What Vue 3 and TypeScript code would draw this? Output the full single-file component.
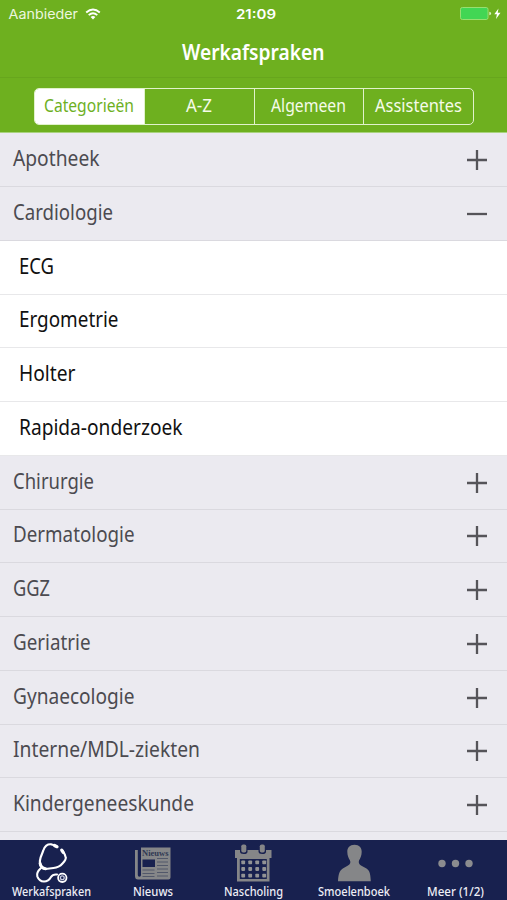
<script setup lang="ts">
import { ref, computed } from 'vue'

interface Item { label: string; width: number }
interface Category extends Item { children?: Item[] }

const tabs: Item[] = [
  { label: 'Categorieën', width: 90 },
  { label: 'A-Z', width: 26 },
  { label: 'Algemeen', width: 75 },
  { label: 'Assistentes', width: 87 },
]
const activeTab = ref(0)
const open = ref('Cardiologie')

const categories: Category[] = [
  { label: 'Apotheek', width: 86.5 },
  {
    label: 'Cardiologie',
    width: 100,
    children: [
      { label: 'ECG', width: 35 },
      { label: 'Ergometrie', width: 99.5 },
      { label: 'Holter', width: 56.5 },
      { label: 'Rapida-onderzoek', width: 163.5 },
    ],
  },
  { label: 'Chirurgie', width: 81 },
  { label: 'Dermatologie', width: 121.5 },
  { label: 'GGZ', width: 37 },
  { label: 'Geriatrie', width: 77.5 },
  { label: 'Gynaecologie', width: 121.5 },
  { label: 'Interne/MDL-ziekten', width: 187 },
  { label: 'Kindergeneeskunde', width: 181 },
  { label: '', width: 0 },
]

interface Row extends Item { child: boolean; expanded: boolean }
const rows = computed<Row[]>(() =>
  categories.flatMap((c) => {
    const expanded = c.label !== '' && c.label === open.value
    return [
      { label: c.label, width: c.width, child: false, expanded },
      ...(expanded ? c.children ?? [] : []).map((k) => ({ ...k, child: true, expanded: false })),
    ]
  }),
)

const nav = [
  { id: 'work', label: 'Werkafspraken', width: 79 },
  { id: 'news', label: 'Nieuws', width: 40 },
  { id: 'cal', label: 'Nascholing', width: 59 },
  { id: 'face', label: 'Smoelenboek', width: 72 },
  { id: 'more', label: 'Meer (1/2)', width: 57 },
]
const calendarDots = [0, 1, 2].flatMap((r) => [0, 1, 2, 3].map((c) => ({ x: 8 + c * 7, y: 16.5 + r * 6.6 })))
</script>

<template>
  <div class="screen">
    <header class="header">
      <div class="status">
        <div class="carrier">
          <svg width="71" height="20"><text x="0.5" y="14.5" textLength="69.5" lengthAdjust="spacingAndGlyphs">Aanbieder</text></svg>
          <svg class="wifi" width="16" height="12" viewBox="0 0 16 12">
            <g fill="none" stroke="#fff" stroke-width="1.9">
              <path d="M1.2 4.5Q8-1.4 14.8 4.5" />
              <path d="M3.7 7.1Q8 3.4 12.3 7.1" />
            </g>
            <path d="M5.6 9Q8 7 10.4 9L8 11.5Z" fill="#fff" />
          </svg>
        </div>
        <svg class="clock" width="40" height="20"><text x="0" y="14.5" textLength="40" lengthAdjust="spacingAndGlyphs">21:09</text></svg>
        <svg class="battery" width="44" height="16" viewBox="0 0 44 16">
          <rect x="0.5" y="1.5" width="27.5" height="12" rx="1.8" fill="#42d654" stroke="#98df70" />
          <path d="M29.3 5.7Q31.1 6 31.1 7.5T29.3 9.3Z" fill="#d8f4c5" />
          <path d="M38.5 2.5L34.3 8.2H36.9L36 13L40.5 6.8H37.7Z" fill="#fff" />
        </svg>
      </div>
      <h1 class="title">
        <svg width="143" height="30"><text x="0" y="22" textLength="142.5" lengthAdjust="spacingAndGlyphs">Werkafspraken</text></svg>
      </h1>
      <div class="filter">
        <div class="segments">
          <button v-for="(t, i) in tabs" :key="t.label" class="segment" :class="{ active: i === activeTab }" @click="activeTab = i">
            <svg :width="t.width" height="26"><text x="0" y="18.5" :textLength="t.width" lengthAdjust="spacingAndGlyphs">{{ t.label }}</text></svg>
          </button>
        </div>
      </div>
    </header>

    <main class="list">
      <div v-for="(r, i) in rows" :key="i" class="row" :class="{ child: r.child }" @click="!r.child && (open = open === r.label ? '' : r.label)">
        <svg v-if="r.label" class="label" :width="r.width + 2" height="32">
          <text x="0" y="23.7" :textLength="r.width" lengthAdjust="spacingAndGlyphs">{{ r.label }}</text>
        </svg>
        <svg v-if="!r.child && r.label" class="toggle" width="20" height="20" viewBox="0 0 20 20">
          <path :d="r.expanded ? 'M0 10H20' : 'M0 10H20M10 0V20'" stroke="#555459" stroke-width="2.3" />
        </svg>
      </div>
    </main>

    <nav class="nav">
      <div v-for="n in nav" :key="n.id" class="nav-item">
        <svg v-if="n.id === 'work'" class="icon" width="40" height="42" viewBox="0 0 40 42" fill="none" stroke="#fff" stroke-linecap="round" stroke-linejoin="round">
          <path d="M22.5 4.3L19.5 3.4Q16.5 3 14.3 4.6Q12.3 6.3 11.3 9.5L8.6 16.5Q7.3 20 8.2 24Q9.3 27.7 13.5 28L21.5 27Q27 26.5 30.5 22.5Q34.3 18.6 33.7 16.3Q33.2 13.3 30.5 9.5" stroke-width="2.1" />
          <path d="M22.5 4.5L25 5.7M29.7 9.2L31.2 11.5" stroke-width="3.2" />
          <path d="M8.1 22.5Q9 27 13.5 27.7" stroke-width="3" />
          <path d="M8.5 27.5Q4.3 31.3 5.3 35.3Q7.2 40.2 12 40.5Q16.5 40.5 19 36Q20.8 33 25 33.5" stroke-width="2.1" />
          <circle cx="30.3" cy="36.8" r="4.2" stroke-width="1.8" />
          <circle cx="30.3" cy="36.8" r="1.9" stroke="#c9cce0" stroke-width="1.3" />
        </svg>
        <svg v-else-if="n.id === 'news'" class="icon" width="40" height="42" viewBox="0 0 40 42">
          <path d="M8 6.5H37.5V36.5Q37.5 38.5 35.5 38.5H5Q2 38.5 2 35V9H4.8V34Q4.8 35.7 6.4 35.7T8 34Z" fill="#858688" />
          <text class="masthead" x="9" y="14.8" textLength="26.5" lengthAdjust="spacingAndGlyphs">Nieuws</text>
          <rect x="9.5" y="18.5" width="12.5" height="7.5" fill="#18214f" />
          <path d="M24 17.5H35M24 21H35M24 24.5H35M24 28H35M9.5 29H21.5M24 31.5H35M9.5 32.5H21.5M24 35H35M9.5 35.5H21.5" stroke="#4c5267" stroke-width=".9" />
        </svg>
        <svg v-else-if="n.id === 'cal'" class="icon" width="40" height="42" viewBox="0 0 40 42">
          <path d="M2 9H7V10.5Q7 13 10.8 13T14.5 10.5V9H25.5V10.5Q25.5 13 29.3 13T33 10.5V9H38.5V17H36.5V40.5H4V17H2Z" fill="#858688" />
          <rect x="8.3" y="3.5" width="5" height="8" rx="1.8" fill="#858688" />
          <rect x="26.8" y="3.5" width="5" height="8" rx="1.8" fill="#858688" />
          <rect x="6.8" y="18" width="27" height="20" fill="#18214f" />
          <rect v-for="(d, i) in calendarDots" :key="i" :x="d.x + .3" :y="d.y + 3" width="3.8" height="3.8" rx=".8" fill="#929395" />
        </svg>
        <svg v-else-if="n.id === 'face'" class="icon" width="40" height="42" viewBox="0 0 40 42">
          <path d="M20.5 3.8C25.3 3.8 27.7 6.7 27.7 10.7C27.7 14.7 26.3 17 25 19.5Q24 22.5 27 24.5L32.5 27.5C36 29.7 36.5 34 36.8 40.3H4C4.3 34 5.3 29.7 8.8 27.5L14 24.5Q17.3 22.5 16 19.5C14.7 17 13.3 14.7 13.3 10.7C13.3 6.7 15.7 3.8 20.5 3.8Z" fill="#858688" />
        </svg>
        <svg v-else class="icon" width="40" height="42" viewBox="0 0 40 42" fill="#8b8c8f">
          <circle cx="7" cy="22.5" r="3.7" /><circle cx="20.5" cy="22.5" r="3.7" /><circle cx="34" cy="22.5" r="3.7" />
        </svg>
        <svg class="caption" :width="n.width" height="17"><text x="0" y="12.3" :textLength="n.width" lengthAdjust="spacingAndGlyphs">{{ n.label }}</text></svg>
      </div>
    </nav>
  </div>
</template>

<style>
body { background: #ebeaf0; }
</style>

<style scoped>
.screen {
  width: 507px;
  height: 900px;
  display: flex;
  flex-direction: column;
  overflow: hidden;
  font-family: "Noto Sans", "Open Sans", sans-serif;
}
svg { display: block; flex: none; overflow: visible; }
.header {
  flex: none;
  height: 133.25px;
  box-sizing: border-box;
  background: #6eb01f;
  border-bottom: 1px solid #a9d37e;
  color: #fff;
}
.status {
  height: 27px;
  display: grid;
  grid-template-columns: 1fr auto 1fr;
  align-items: center;
  padding: 0 3px 0 8px;
  font-family: Inter, "Liberation Sans", sans-serif;
}
.status text { fill: #fff; font-size: 13.5px; }
.carrier { display: flex; align-items: center; gap: 6px; padding-top: 1px; }
.carrier text { fill: #ecf7df; }
.clock { margin-top: 1px; }
.clock text { font-weight: 600; }
.battery { justify-self: end; }
.title {
  height: 51px;
  margin: 0;
  display: flex;
  justify-content: center;
  align-items: flex-start;
  box-sizing: border-box;
  padding-top: 11px;
  border-bottom: 1px solid #67a61d;
}
.title text { font-size: 21px; font-weight: 600; fill: #fff; }
.filter { padding: 10px 33px 0 34px; }
.segments {
  display: flex;
  height: 36.5px;
  box-sizing: border-box;
  border: 1.5px solid #e1f2cb;
  border-radius: 5px;
  overflow: hidden;
}
.segment {
  flex: 1;
  display: flex;
  justify-content: center;
  align-items: flex-start;
  padding: 4px 0 0;
  border: 0;
  border-right: 1px solid #e1f2cb;
  background: transparent;
  font: inherit;
}
.segment:last-child { border-right: 0; }
.segment text { font-size: 18px; fill: #f5fbe9; }
.segment.active { background: #fff; }
.segment.active text { fill: #6eb01f; }
.list { flex: 1; min-height: 0; overflow: hidden; background: #ebeaf0; }
.row {
  height: 53.75px;
  box-sizing: border-box;
  display: flex;
  justify-content: space-between;
  align-items: flex-start;
  padding: 8.75px 20px 0 13px;
  border-bottom: 1px solid #dad9df;
  background: #ebeaf0;
}
.row text { font-size: 21px; fill: #4c4b50; }
.row.child { padding-left: 19px; background: #fff; border-bottom-color: #e8e8ea; }
.row.child text { fill: #111; }
.toggle { margin-top: 8px; }
.nav {
  flex: none;
  height: 60px;
  display: grid;
  grid-template-columns: repeat(5, 100.9px);
  justify-content: center;
  background: #18214f;
}
.nav-item { display: flex; flex-direction: column; align-items: center; }
.icon { margin-top: 1px; }
.caption text { font-size: 12px; font-weight: 500; fill: #eeeef6; }
.caption { margin-top: 1px; }
.masthead { font: bold 8.5px "Liberation Serif", serif; fill: #303853; }
</style>
